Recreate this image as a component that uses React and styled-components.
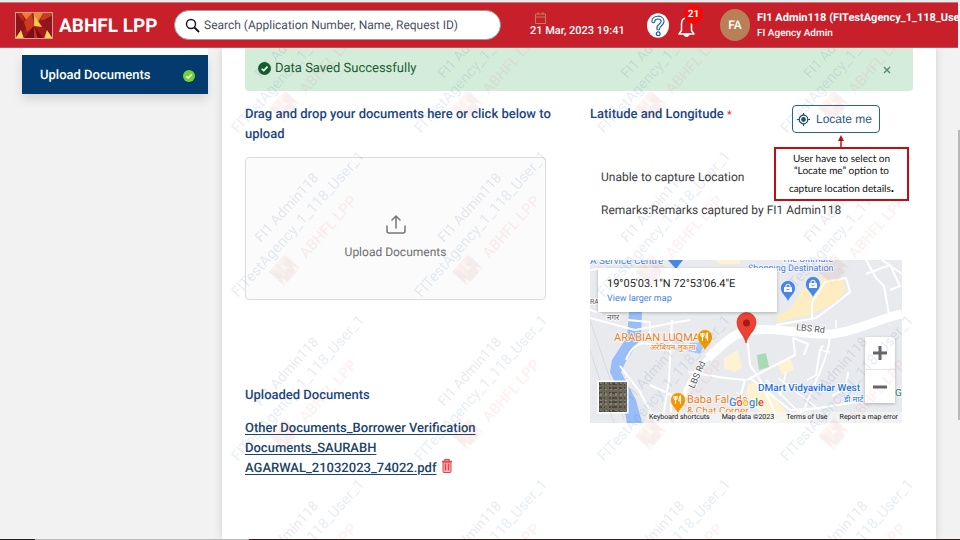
import React from 'react';
import styled, { createGlobalStyle } from 'styled-components';

const GlobalStyle = createGlobalStyle`
  *, *::before, *::after { box-sizing: border-box; }
  body { margin: 0; background: #f2f2f2; overflow: hidden; font-family: Roboto, "Noto Sans", sans-serif; color: #333; font-size: 13px; line-height: 20px; text-rendering: geometricPrecision; }
  button, input { font: inherit; text-rendering: inherit; }
  h1, h2, p { margin: 0; }
`;

const Page = styled.div`
  height: 100vh;
  display: flex;
  flex-direction: column;
  overflow: hidden;
  border-top: 2px solid #e3ebec;
`;

const Header = styled.header`
  flex: none;
  position: relative;
  z-index: 3;
  height: 46px;
  margin-right: 2px;
  padding-left: 15px;
  display: flex;
  align-items: center;
  background: #c8202a;
  border-top: 1px solid #d3737a;
  border-bottom: 1px solid #b9555c;
  color: #fff;
  overflow: hidden;
`;

const Brand = styled.h1`
  flex: none;
  width: 115px;
  margin-left: 6px;
  padding-top: 2px;
  font-size: 19px;
  line-height: 24px;
  font-weight: 700;
  white-space: nowrap;
`;

const Logo = styled.svg`
  flex: none;
  width: 38px;
  height: 27px;
`;

const SearchBox = styled.label`
  flex: 0 1 327px;
  height: 30px;
  padding: 0 14px 0 10px;
  display: flex;
  align-items: center;
  gap: 4px;
  border-radius: 15px;
  border: 1px solid #9a9a9a;
  background: #fff;
`;

const SearchInput = styled.input`
  flex: 1;
  min-width: 0;
  border: 0;
  outline: 0;
  padding: 0;
  background: none;
  font-size: 12px;
  color: #444a58;
  &::placeholder { color: #4b5062; opacity: 1; }
`;

const DateBlock = styled.div`
  flex: none;
  width: 88px;
  margin: 0 29px;
  display: flex;
  flex-direction: column;
  font-size: 11px;
  line-height: 14px;
  font-weight: 500;
  white-space: nowrap;
  svg { margin-left: 5px; }
`;

const IconButton = styled.button`
  flex: none;
  position: relative;
  padding: 0;
  border: 0;
  background: none;
  color: #fff;
  display: flex;
  cursor: pointer;
`;

const HelpButton = styled(IconButton)`
  margin-right: 9px;
`;

const Badge = styled.span`
  position: absolute;
  right: -8px;
  top: -8px;
  width: 19px;
  height: 19px;
  border-radius: 50%;
  background: #fb0505;
  font-size: 10px;
  line-height: 19px;
  font-weight: 700;
  text-align: center;
`;

const Avatar = styled.div`
  flex: none;
  width: 30px;
  height: 32px;
  margin: 0 7px 0 25px;
  border-radius: 50%;
  background: #b98058;
  font-size: 12px;
  line-height: 32px;
  font-weight: 500;
  text-align: center;
`;

const UserInfo = styled.div`
  flex: 1 1 0;
  min-width: 0;
  padding-top: 2px;
  overflow: hidden;
  white-space: nowrap;
  font-size: 10px;
  line-height: 16px;
  font-weight: 500;
`;

const UserName = styled.div`
  font-size: 11px;
  font-weight: 700;
`;

const Body = styled.div`
  flex: 1;
  min-height: 0;
  display: flex;
  gap: 14px;
  padding: 0 24px 0 22px;
`;

const Sidebar = styled.nav`
  flex: none;
  width: 186px;
  border-top: 7px solid #fff;
`;

const NavLink = styled.a`
  height: 39px;
  padding: 2px 13px 0 18px;
  display: flex;
  align-items: center;
  justify-content: space-between;
  background: #043b6e;
  color: #fff;
  font-size: 13px;
  font-weight: 500;
  text-decoration: none;
  box-shadow: 0 5px 10px rgba(0, 0, 0, 0.12);
`;

const Panel = styled.main`
  flex: 1;
  min-width: 0;
  position: relative;
  padding: 0 23px;
  background: #fff;
  box-shadow: 0 0 8px rgba(0, 0, 0, 0.14);
`;

const Watermark = styled.svg`
  position: absolute;
  inset: 0;
  width: 100%;
  height: 100%;
  pointer-events: none;
`;

const Alert = styled.div`
  height: 43px;
  padding: 0 22px 2px 13px;
  display: flex;
  align-items: center;
  gap: 4px;
  border-radius: 0 0 4px 4px;
  background: #d4edda;
  color: #1f5c33;
  font-size: 13px;
`;

const CloseButton = styled.button`
  margin-left: auto;
  padding: 3px 0 0;
  border: 0;
  background: none;
  display: flex;
  color: #5d8c6b;
  cursor: pointer;
`;

const Columns = styled.div`
  display: grid;
  grid-template-columns: minmax(0, 309fr) minmax(0, 323fr);
  column-gap: 36px;
  padding-top: 14px;
`;

const Heading = styled.h2`
  font-size: 13px;
  line-height: 20px;
  font-weight: 500;
  color: #1d4680;
`;

const Required = styled.span`
  color: #e0343c;
  font-size: 11px;
  font-weight: 400;
`;

const DropZone = styled.button`
  width: calc(100% - 8px);
  height: 143px;
  margin: 12px 0 86px;
  padding: 20px 0 0;
  display: flex;
  flex-direction: column;
  align-items: center;
  justify-content: center;
  gap: 8px;
  border: 1px solid #dcdcdc;
  border-radius: 4px;
  background: #fbfbfb;
  color: #6e6e6e;
  font-size: 12px;
  line-height: 20px;
  cursor: pointer;
`;

const FileRow = styled.p`
  width: 240px;
  margin-top: 13px;
  font-size: 13px;
  line-height: 20px;
`;

const FileLink = styled.a`
  color: #1b436b;
  font-weight: 500;
  text-decoration: underline;
  text-underline-offset: 2px;
`;

const DeleteButton = styled.button`
  padding: 0;
  margin-left: 5px;
  border: 0;
  background: none;
  color: #e5434a;
  vertical-align: -1px;
  line-height: 0;
  cursor: pointer;
`;

const LocationHead = styled.div`
  display: flex;
  justify-content: space-between;
  align-items: flex-start;
  padding-right: 33px;
`;

const LocateArea = styled.div`
  position: relative;
  display: flex;
`;

const LocateButton = styled.button`
  width: 88px;
  height: 28px;
  padding: 0 7px 0 4px;
  display: flex;
  align-items: center;
  justify-content: space-between;
  border: 1px solid #2a6290;
  border-radius: 4px;
  background: #fff;
  color: #2c5a86;
  font-family: "Liberation Sans", Arial, sans-serif;
  font-size: 12px;
  white-space: nowrap;
  cursor: pointer;
`;

const Callout = styled.div`
  position: absolute;
  z-index: 2;
  top: 42px;
  right: -29px;
  width: 135px;
  height: 54px;
  padding: 4px 0 2px;
  border: 2px solid #c00f12;
  background: #fff;
  color: #111;
  font-family: Lato, sans-serif;
  font-size: 10px;
  line-height: 12px;
  text-align: center;
  white-space: nowrap;
`;

const CalloutLast = styled.div`
  padding-top: 2px;
  line-height: 16px;
  b { font-size: 14px; }
`;

const Arrow = styled.svg`
  position: absolute;
  top: 30px;
  left: 45px;
`;

const Details = styled.div`
  padding: 34px 0 0 11px;
  display: flex;
  flex-direction: column;
  gap: 13px;
  color: #3c3c3c;
  font-size: 12px;
`;

const MapFrame = styled.div`
  position: relative;
  height: 163px;
  margin: 40px 11px 0 0;
  overflow: hidden;
  background: #e8eaed;
`;

const MapArt = styled.svg`
  display: block;
  width: 100%;
  height: 163px;
`;

const PlaceCard = styled.div`
  position: absolute;
  left: 8px;
  top: 8px;
  width: 179px;
  height: 44px;
  padding: 8px 9px;
  background: #fff;
  box-shadow: 0 1px 3px rgba(0, 0, 0, 0.25);
  color: #222;
  font-size: 11px;
  line-height: 16px;
  white-space: nowrap;
`;

const PlaceLink = styled.a`
  display: block;
  color: #427fed;
  font-size: 9px;
  line-height: 14px;
  text-decoration: none;
`;

const ZoomControls = styled.div`
  position: absolute;
  right: 7px;
  bottom: 20px;
  width: 30px;
  background: #fff;
  box-shadow: 0 1px 3px rgba(0, 0, 0, 0.25);
`;

const ZoomButton = styled.button`
  width: 30px;
  height: 33px;
  padding: 0;
  border: 0;
  border-bottom: ${(p) => (p.$divided ? '1px solid #e6e6e6' : '0')};
  background: none;
  color: #666;
  display: flex;
  align-items: center;
  justify-content: center;
  cursor: pointer;
`;

const MapFooter = styled.div`
  position: absolute;
  right: 0;
  bottom: 0;
  padding: 0 4px 0 2px;
  display: flex;
  gap: 12px;
  background: rgba(245, 245, 245, 0.7);
  font-size: 7px;
  line-height: 11px;
  color: #111;
  white-space: nowrap;
`;

const MapText = styled.a`
  color: inherit;
  text-decoration: none;
`;

const ScrollThumb = styled.div`
  position: absolute;
  right: 0;
  top: 130px;
  width: 2px;
  height: 290px;
  background: #b9b9b9;
`;

const BottomEdge = styled.div`
  position: absolute;
  left: 0;
  right: 0;
  bottom: 0;
  height: 1px;
  background: linear-gradient(90deg, #222 0 35px, #b9b9b9 35px 249px, #35201f 249px);
`;

function LogoArt() {
  return (
    <g>
      <rect width="38" height="27" fill="#a3191f" />
      <path d="M0 0L14 14L0 27Z" fill="#8c1519" />
      <path d="M0 0H8L9 10Z" fill="#b8291f" />
      <path d="M6 0H18L12 9Z" fill="#ef7b2c" />
      <path d="M18 0H29L21 13Z" fill="#ee8a2e" />
      <path d="M29 0H38V4L31 10L25 7Z" fill="#cb3a23" />
      <path d="M38 3V27L25 10Z" fill="#8f161c" />
      <path d="M9 10L17 1L19 14L12 20Z" fill="#cf3a24" />
      <path d="M19 3L27 15L19 14Z" fill="#f8c64c" />
      <path d="M19 14L29 27H9Z" fill="#7d0d15" />
      <path d="M19 14L23 27H19Z" fill="#c3301f" />
      <path d="M0 27L6 18L9 27Z" fill="#ffd45b" />
      <path d="M38 27L32 18L29 27Z" fill="#ffd45b" />
      <rect x="0.5" y="0.5" width="37" height="26" fill="none" stroke="#cfa090" />
    </g>
  );
}

function WatermarkLayer() {
  return (
    <Watermark aria-hidden="true">
      <defs>
        <pattern id="wm" x="6" y="-75" width="183" height="164" patternUnits="userSpaceOnUse">
          <g fontFamily="Roboto, sans-serif">
            <text transform="translate(33 106) rotate(-48)" fontSize="14" fill="#3c4e7d" fillOpacity="0.12">FI1 Admin118</text>
            <text transform="translate(10 161) rotate(-48)" fontSize="15" fill="#3c6ea8" fillOpacity="0.12">FITestAgency_1_118_User_1</text>
            <text transform="translate(78 122) rotate(-48)" fontSize="15" fill="#e0303a" fillOpacity="0.07" fontWeight="500">ABHFL LPP</text>
          </g>
          <g transform="translate(41 135) rotate(-48) scale(0.62 0.75)" opacity="0.07"><LogoArt /></g>
        </pattern>
      </defs>
      <rect width="100%" height="100%" fill="url(#wm)" />
    </Watermark>
  );
}

function CheckIcon({ fill, size }) {
  return (
    <svg width={size} height={size} viewBox="0 0 12 12">
      <circle cx="6" cy="6" r="6" fill={fill} />
      <path d="M3.4 6.2L5.3 8L8.8 4.3" fill="none" stroke="#fff" strokeWidth="1.5" />
    </svg>
  );
}

function FoodPin({ x, y }) {
  return (
    <g transform={`translate(${x} ${y})`}>
      <path d="M0 14C-2 8-7.5 6-7.5 0A7.5 7.5 0 0 1 7.5 0C7.5 6 2 8 0 14Z" fill="#f29900" stroke="#fff" strokeWidth="0.6" />
      <path d="M-2.5-4V4M-4-4V-1.5Q-2.5 1-1-1.5V-4M2.5 4V-4Q1 -3 1 1H2.5" fill="none" stroke="#fff" strokeWidth="1.1" />
    </g>
  );
}

function ShopPin({ x, y }) {
  return (
    <g transform={`translate(${x} ${y})`}>
      <path d="M0 14C-2 8-7.5 6-7.5 0A7.5 7.5 0 0 1 7.5 0C7.5 6 2 8 0 14Z" fill="#4a86e8" stroke="#fff" strokeWidth="0.6" />
      <path d="M-4-1H4V4H-4Z" fill="#fff" />
      <path d="M-2-1V-2.5Q0-5 2-2.5V-1" fill="none" stroke="#fff" strokeWidth="1.1" />
      <path d="M-1.5 1Q0 3 1.5 1" fill="none" stroke="#4a86e8" strokeWidth="0.9" />
    </g>
  );
}

function LocationMap() {
  return (
    <MapFrame>
      <MapArt viewBox="0 0 312 163" preserveAspectRatio="xMidYMid slice" role="img" aria-label="Map of LBS Road">
        <rect width="312" height="163" fill="#e8eaed" />
        <path d="M187 55L200 50L212 30L230 18L252 18L256 30L246 42L222 54L187 62Z" fill="#fdedc0" />
        <path d="M134 98L148 90L152 108L145 112L134 108ZM158 124L172 122L205 163H178L156 134Z" fill="#fdf3d3" />
        <path d="M125 0L150 0V4H130ZM188 105L200 98L204 110L192 115Z" fill="#fdf3d3" />
        <path d="M39 52H52L51 78L35 103L31 112L46 140L52 163H37L32 138L20 112L22 100L37 77Z" fill="#98bdf8" />
        <path d="M100 83L116 82L110 94L94 90Z" fill="#a9c8fa" />
        <path d="M167 95L176 93L179 107L169 110Z" fill="#a8dab5" />
        <g fill="none" stroke="#fff" strokeLinejoin="round">
          <path d="M118 98C135 82 145 73 157 71C190 66 215 76 242 74C268 71 285 60 312 54" strokeWidth="9" />
          <path d="M118 98C104 112 94 128 86 163" strokeWidth="5" />
          <path d="M82 60L79 120L72 163M0 58L45 70L82 63L100 60M36 100C45 78 58 80 78 92M30 106L50 132L66 163M38 60L60 62L60 78M157 75L160 105L170 120L186 155M157 120L205 95L203 78L218 84L214 95M160 118L200 150L230 148M240 76C238 100 225 120 215 148M222 60V42L235 22L256 18L260 32L245 44L226 58L186 65M233 85L230 90L226 115L217 120M276 0L286 18L294 26L300 60M276 14L300 5L310 26L300 30M180 163L215 150L268 142M242 136L256 128L258 112M292 0L312 14M60 125L82 135L80 163M98 112L135 118L155 120L148 145M0 10L16 8M0 50L12 54" strokeWidth="2" />
          <path d="M176 120L220 163M188 118L230 150M196 112L190 136M146 132L170 150M230 90L240 92M246 68V60" strokeWidth="1.5" />
        </g>
        <path d="M0 60L34 160M0 90L24 163" stroke="#d8dadd" strokeWidth="1" />
        <g fontFamily="Roboto, sans-serif" stroke="#fff" strokeWidth="1.5" paintOrder="stroke">
          <text x="0" y="4" fontSize="10" fill="#3f7ae0">A Service Centre</text>
          <text x="192" y="2" fontSize="9" fill="#3f7ae0">The Ultimate</text>
          <text x="158" y="11" fontSize="9" fill="#3f7ae0">Shopping Destination</text>
          <text x="0" y="44" fontSize="7" fill="#555">RA</text>
          <text x="17" y="60" fontSize="8" fontFamily="Noto Sans, sans-serif" fill="#555">नगर</text>
          <text x="24" y="81" fontSize="11" fill="#e57c1c">ARABIAN LUQMA</text>
          <text x="60" y="90" fontSize="8" fontFamily="Noto Sans, sans-serif" fill="#e57c1c">अरेबियन लुकमा</text>
          <text x="97" y="143" fontSize="11" fill="#e57c1c">Baba Faloda</text>
          <text x="97" y="154" fontSize="10" fill="#e57c1c">&amp; Chat Corner</text>
          <text transform="translate(206 70) rotate(6)" fontSize="9" fill="#555">LBS Rd</text>
          <text transform="translate(104 129) rotate(-66)" fontSize="9" fill="#555">LBS Rd</text>
          <text x="168" y="131" fontSize="10" fontWeight="500" fill="#1b6fe0">DMart Vidyavihar West</text>
          <text x="254" y="142" fontSize="8" fontFamily="Noto Sans, sans-serif" fill="#1b6fe0">डी मार्ट</text>
          <text x="305" y="136" fontSize="10" fill="#27806a">G</text>
        </g>
        <path d="M78 0H93L86 9Z" fill="#4a86e8" />
        <FoodPin x="115" y="77" />
        <FoodPin x="88" y="140" />
        <ShopPin x="198" y="28" />
        <ShopPin x="223" y="24" />
        <path d="M156 83C154 74 147 71 147 62A9.5 9.5 0 0 1 166 62C166 71 158 74 156 83Z" fill="#ea4335" stroke="#c5221f" strokeWidth="0.6" />
        <circle cx="156.500" cy="63" r="3.500" fill="#a31b16" />
        <text x="139" y="146" fontSize="11" fontWeight="500" fontFamily="Roboto, sans-serif" stroke="#fff" strokeWidth="1.5" paintOrder="stroke">
          <tspan fill="#4285f4">G</tspan><tspan fill="#ea4335">o</tspan><tspan fill="#fbbc05">o</tspan><tspan fill="#4285f4">g</tspan><tspan fill="#34a853">l</tspan><tspan fill="#ea4335">e</tspan>
        </text>
        <g>
          <rect x="7.500" y="120.500" width="31" height="33" fill="#fff" />
          <rect x="9" y="122" width="28" height="30" fill="#6a6759" />
          <path d="M9 124H37M9 128H37M9 133H37M9 138H37M9 142H37M9 147H37M9 151H37" stroke="#4b493f" strokeWidth="2" strokeDasharray="3 2 1 4 2 1 5 2" fill="none" />
          <path d="M11 122V152M16 122V152M21 122V152M26 122V152M31 122V152M35 122V152" stroke="#8f8c7b" strokeWidth="1.500" strokeDasharray="2 5 1 3 3 4 1 2" fill="none" />
        </g>
      </MapArt>
      <PlaceCard>
        19°05'03.1"N 72°53'06.4"E
        <PlaceLink href="#map">View larger map</PlaceLink>
      </PlaceCard>
      <ZoomControls>
        <ZoomButton $divided aria-label="Zoom in">
          <svg width="14" height="14"><path d="M7 0V14M0 7H14" stroke="currentColor" strokeWidth="3" /></svg>
        </ZoomButton>
        <ZoomButton aria-label="Zoom out">
          <svg width="14" height="14"><path d="M0 7H14" stroke="currentColor" strokeWidth="3" /></svg>
        </ZoomButton>
      </ZoomControls>
      <MapFooter>
        <MapText href="#shortcuts">Keyboard shortcuts</MapText>
        <span>Map data ©2023</span>
        <MapText href="#terms">Terms of Use</MapText>
        <MapText href="#report">Report a map error</MapText>
      </MapFooter>
    </MapFrame>
  );
}

function TopBar() {
  return (
    <Header>
      <Logo viewBox="0 0 38 27" aria-label="ABHFL"><LogoArt /></Logo>
      <Brand>ABHFL LPP</Brand>
      <SearchBox>
        <svg width="15" height="15" viewBox="0 0 15 15" fill="none" stroke="#171717">
          <circle cx="6" cy="6" r="4.500" strokeWidth="1.400" />
          <path d="M9.500 9.500L14 14" strokeWidth="2" />
        </svg>
        <SearchInput aria-label="Search" placeholder="Search (Application Number, Name, Request ID)" />
      </SearchBox>
      <DateBlock>
        <svg width="11" height="12" viewBox="0 0 11 12" fill="none" stroke="#c77a55">
          <path d="M0.500 2H10.500V11.500H0.500ZM0.500 5H10.500M3 0V3M8 0V3" />
        </svg>
        21 Mar, 2023 19:41
      </DateBlock>
      <HelpButton aria-label="Help">
        <svg width="22" height="25" viewBox="0 0 22 25">
          <ellipse cx="11" cy="12.500" rx="11" ry="12.200" fill="#fff" />
          <path d="M6.300 8.300C6.500 3.500 15.500 3.300 15.600 8.300C15.600 12 11.200 11.800 11.200 15.500" fill="none" stroke="#1f5f9c" strokeWidth="4" strokeLinecap="round" />
          <path d="M6.300 8.300C6.500 3.500 15.500 3.300 15.600 8.300C15.600 12 11.200 11.800 11.200 15.500" fill="none" stroke="#fff" strokeWidth="1.800" strokeLinecap="round" />
          <circle cx="11.200" cy="20.800" r="1.900" fill="#fff" stroke="#1f5f9c" strokeWidth="1.200" />
        </svg>
      </HelpButton>
      <IconButton aria-label="Notifications">
        <svg width="17" height="25" viewBox="0 0 17 25" fill="none" stroke="#fff" strokeWidth="1.500">
          <path d="M1 21H16L13.500 17.500V11C13.500 7 11.500 5 8.500 5C5.500 5 3.500 7 3.500 11V17.500ZM8.500 5V3" strokeLinejoin="round" />
          <path d="M6 21.500Q8.500 25 11 21.500Z" fill="#fff" />
        </svg>
        <Badge>21</Badge>
      </IconButton>
      <Avatar>FA</Avatar>
      <UserInfo>
        <UserName>FI1 Admin118 (FITestAgency_1_118_User_1)</UserName>
        FI Agency Admin
      </UserInfo>
    </Header>
  );
}

export default function App() {
  return (
    <>
      <GlobalStyle />
      <Page>
        <TopBar />
        <Body>
          <Sidebar>
            <NavLink href="#upload">Upload Documents<CheckIcon fill="#76d032" size="12" /></NavLink>
          </Sidebar>
          <Panel>
            <Alert role="status">
              <CheckIcon fill="#155c2c" size="13" />
              Data Saved Successfully
              <CloseButton aria-label="Close">
                <svg width="8" height="8"><path d="M1 1L7 7M7 1L1 7" stroke="currentColor" strokeWidth="1.500" /></svg>
              </CloseButton>
            </Alert>
            <Columns>
              <section>
                <Heading>Drag and drop your documents here or click below to upload</Heading>
                <DropZone>
                  <svg width="20" height="19" viewBox="0 0 20 19" fill="none" stroke="#777" strokeWidth="1.500" strokeLinecap="round" strokeLinejoin="round">
                    <path d="M1 11V16Q1 18 3 18H17Q19 18 19 16V11M10 13V1M6 5L10 1L14 5" />
                  </svg>
                  Upload Documents
                </DropZone>
                <Heading>Uploaded Documents</Heading>
                <FileRow>
                  <FileLink href="#file">Other Documents_Borrower Verification Documents_SAURABH AGARWAL_21032023_74022.pdf</FileLink>
                  <DeleteButton aria-label="Delete document">
                    <svg width="10" height="14" viewBox="0 0 10 14" fill="none" stroke="currentColor">
                      <path d="M1 3H9V12.500Q9 13.500 8 13.500H2Q1 13.500 1 12.500Z" fill="#f6b3b5" />
                      <path d="M0 2.500H10M3 2V0.500H7V2M3.500 4.500V11.500M6.500 4.500V11.500" strokeWidth="1.400" />
                    </svg>
                  </DeleteButton>
                </FileRow>
              </section>
              <section>
                <LocationHead>
                  <Heading>Latitude and Longitude <Required>*</Required></Heading>
                  <LocateArea>
                    <LocateButton>
                      <svg width="13" height="13" viewBox="0 0 13 13" fill="none" stroke="#1c4f7c" strokeWidth="1.200">
                        <circle cx="6.500" cy="6.500" r="4.300" />
                        <circle cx="6.500" cy="6.500" r="1.800" fill="#1c4f7c" />
                        <path d="M6.500 0V2.500M6.500 10.500V13M0 6.500H2.500M10.500 6.500H13" />
                      </svg>
                      Locate me
                    </LocateButton>
                    <Arrow width="8" height="13" viewBox="0 0 8 13">
                      <path d="M4 13V5" stroke="#c00f12" strokeWidth="1.500" />
                      <path d="M4 0L7 6H1Z" fill="#c00f12" />
                    </Arrow>
                    <Callout role="note">
                      User have to select on<br />“Locate me” option to
                      <CalloutLast>capture location details<b>.</b></CalloutLast>
                    </Callout>
                  </LocateArea>
                </LocationHead>
                <Details>
                  <p>Unable to capture Location</p>
                  <p>Remarks:Remarks captured by FI1 Admin118</p>
                </Details>
                <LocationMap />
              </section>
            </Columns>
            <WatermarkLayer />
          </Panel>
        </Body>
        <ScrollThumb />
        <BottomEdge />
      </Page>
    </>
  );
}
